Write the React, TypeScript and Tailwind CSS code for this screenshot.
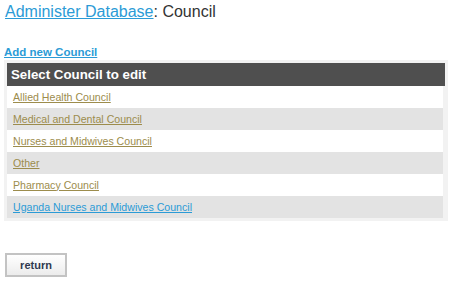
const councils = [
  "Allied Health Council",
  "Medical and Dental Council",
  "Nurses and Midwives Council",
  "Other",
  "Pharmacy Council",
  "Uganda Nurses and Midwives Council",
];

export default function App() {
  return (
    <div className="h-[283px] w-[454px] bg-white font-['Liberation_Sans',Arial,sans-serif] text-[#333]">
      <h1 className="px-[5px] pt-[2px] text-[16px] leading-[20px]">
        <a href="#" className="text-[#2b9bd6] underline">
          Administer Database
        </a>
        <span>: Council</span>
      </h1>

      <div className="mt-[24px] px-[4px] text-[11.5px] leading-[13px]">
        <a href="#" className="font-bold text-[#2b9bd6] underline">
          Add new Council
        </a>
      </div>

      <div className="mx-[4px] mt-[1px] w-[444px] bg-[#f2f2f2] px-[3px] pt-[3px] pb-[3px]">
        <div className="h-[23px] bg-[#4f4f4f] px-[4px] text-[13.3px] font-bold leading-[23px] text-white">
          Select Council to edit
        </div>
        <div className="mr-[2px] text-[10.6px] leading-[13px]">
          {councils.map((c, i) => (
            <div
              key={c}
              className={
                i % 2 === 0
                  ? "flex h-[22px] items-center bg-white px-[6px]"
                  : "flex h-[22px] items-center bg-[#e3e3e3] px-[6px]"
              }
            >
              <a
                href="#"
                className={
                  i === councils.length - 1
                    ? "text-[#2b9bd6] underline"
                    : "text-[#9c8c4c] underline"
                }
              >
                {c}
              </a>
            </div>
          ))}
        </div>
      </div>

      <div className="mt-[32px] px-[5px] leading-none">
        <button className="h-[24px] w-[62px] border-2 border-[#c3c3c3] bg-gradient-to-b from-white to-[#ececec] text-[11px] font-bold text-[#2f3a4f]">
          return
        </button>
      </div>
    </div>
  );
}
